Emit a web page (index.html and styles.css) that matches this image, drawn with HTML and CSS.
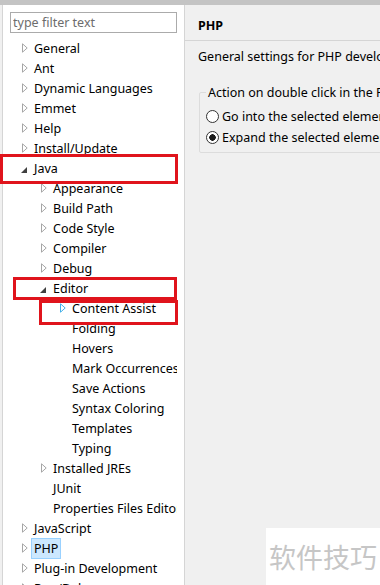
FILE: index.html
```html
<!DOCTYPE html>
<html lang="en">
<head>
    <meta charset="UTF-8">
    <title>Preferences</title>
    <link rel="stylesheet" href="styles.css">
</head>
<body>

    <div class="topbar"></div>

    <div class="frame">
        <!-- left: filter + tree -->
        <div class="side">
            <input class="filter" type="text" placeholder="type filter text">
            <div class="tree">
                <div class="row l0"><span class="tw"></span>General</div>
                <div class="row l0"><span class="tw"></span>Ant</div>
                <div class="row l0"><span class="tw"></span>Dynamic Languages</div>
                <div class="row l0"><span class="tw"></span>Emmet</div>
                <div class="row l0"><span class="tw"></span>Help</div>
                <div class="row l0"><span class="tw"></span>Install/Update</div>
                <div class="row l0"><span class="tw open"></span>Java</div>
                <div class="row l1"><span class="tw"></span>Appearance</div>
                <div class="row l1"><span class="tw"></span>Build Path</div>
                <div class="row l1"><span class="tw"></span>Code Style</div>
                <div class="row l1"><span class="tw"></span>Compiler</div>
                <div class="row l1"><span class="tw"></span>Debug</div>
                <div class="row l1"><span class="tw open"></span>Editor</div>
                <div class="row l2"><span class="tw hot"></span>Content Assist</div>
                <div class="row l2"><span class="tw none"></span>Folding</div>
                <div class="row l2"><span class="tw none"></span>Hovers</div>
                <div class="row l2"><span class="tw none"></span>Mark Occurrences</div>
                <div class="row l2"><span class="tw none"></span>Save Actions</div>
                <div class="row l2"><span class="tw none"></span>Syntax Coloring</div>
                <div class="row l2"><span class="tw none"></span>Templates</div>
                <div class="row l2"><span class="tw none"></span>Typing</div>
                <div class="row l1"><span class="tw"></span>Installed JREs</div>
                <div class="row l1"><span class="tw none"></span>JUnit</div>
                <div class="row l1"><span class="tw none"></span>Properties Files Editor</div>
                <div class="row l0"><span class="tw"></span>JavaScript</div>
                <div class="row l0"><span class="tw"></span><span class="sel">PHP</span></div>
                <div class="row l0"><span class="tw"></span>Plug-in Development</div>
                <div class="row l0"><span class="tw"></span>Run/Debug</div>
            </div>
        </div>

        <!-- right: PHP page -->
        <div class="page">
            <div class="page-title">PHP</div>
            <div class="page-body">
                <p class="desc">General settings for PHP development</p>
                <fieldset class="group">
                    <legend>Action on double click in the PHP Explorer view</legend>
                    <label class="radio"><span class="dot"></span>Go into the selected element</label>
                    <label class="radio"><span class="dot on"></span>Expand the selected element</label>
                </fieldset>
            </div>
        </div>

        <!-- annotation boxes drawn over the tree -->
        <div class="mark mark-java"></div>
        <div class="mark mark-editor"></div>
        <div class="mark mark-assist"></div>

        <div class="watermark">软件技巧</div>
    </div>

</body>
</html>
```

FILE: styles.css
```css
body {
    margin: 0;
    width: 380px;
    height: 585px;
    overflow: hidden;
    background: #f0f0f0;
    font-family: "Noto Sans", "Noto Sans CJK SC", sans-serif;
    font-size: 12px;
    color: #000;
}
.topbar {
    height: 5px;
    background: #c4c4c4;
}
.frame {
    position: relative;
    display: flex;
    height: 580px;
}

/* left side */
.side {
    width: 181px;
    margin-left: 2px;
    border-left: 1px solid #d5d5d5;
    border-right: 1px solid #d5d5d5;
    background: #fff;
    padding-top: 7px;
    overflow: hidden;
}
.filter {
    display: block;
    box-sizing: border-box;
    width: 167px;
    height: 21px;
    margin-left: 7px;
    padding: 0 2px;
    border: 1px solid #ababab;
    font-family: inherit;
    font-size: 12.5px;
    color: #6d6d6d;
    outline: none;
}
.filter::placeholder { color: #6d6d6d; }
.tree {
    width: 174px;
    margin-top: 5px;
    overflow: hidden;
}
.row {
    display: flex;
    align-items: center;
    height: 20px;
    white-space: nowrap;
    font-size: 12.5px;
}
.l0 { padding-left: 17px; }
.l1 { padding-left: 36px; }
.l2 { padding-left: 55px; }
.tw {
    flex: none;
    width: 14px;
    height: 20px;
    background: no-repeat 2px center;
    background-image: url("data:image/svg+xml,%3Csvg xmlns='http://www.w3.org/2000/svg' width='6' height='10'%3E%3Cpath d='M0.5 0.8 L5.2 5 L0.5 9.2 Z' fill='none' stroke='%23a6a6a6'/%3E%3C/svg%3E");
}
.tw.open {
    background-position: 1px 9px;
    background-image: url("data:image/svg+xml,%3Csvg xmlns='http://www.w3.org/2000/svg' width='7' height='7'%3E%3Cpath d='M6 0 L6 6 L0 6 Z' fill='%23404040'/%3E%3C/svg%3E");
}
.tw.hot {
    background-image: url("data:image/svg+xml,%3Csvg xmlns='http://www.w3.org/2000/svg' width='6' height='10'%3E%3Cpath d='M0.5 0.8 L5.2 5 L0.5 9.2 Z' fill='none' stroke='%2344b0e8'/%3E%3C/svg%3E");
}
.tw.none { background-image: none; }
.sel {
    margin-left: -3px;
    padding: 1px 2px;
    line-height: 17px;
    background: #cce8ff;
    border: 1px solid #99d1ff;
}

/* right side */
.page {
    flex: 1;
    overflow: hidden;
    white-space: nowrap;
}
.page-title {
    height: 28px;
    line-height: 28px;
    padding: 7px 0 0 13px;
    border-bottom: 1px solid #d5d5d5;
    font-weight: bold;
    font-size: 12.5px;
}
.page-body {
    padding-left: 13px;
    font-size: 12.5px;
}
.desc {
    margin: 7px 0 0;
    line-height: 17px;
}
.group {
    margin: 19px 0 0 1px;
    padding: 5px 0 4px 6px;
    border: 1px solid #dcdcdc;
    border-radius: 2px;
    width: 300px;
}
.group legend {
    padding: 0 2px;
    margin-left: 0;
    line-height: 17px;
}
.radio {
    display: flex;
    align-items: center;
    height: 21px;
}
.dot {
    box-sizing: border-box;
    width: 13px;
    height: 13px;
    margin-right: 3px;
    border: 1px solid #333;
    border-radius: 50%;
    background: #fff;
}
.dot.on {
    background: radial-gradient(circle, #1a1a1a 0 3px, #fff 3.5px);
}

/* red annotation boxes */
.mark {
    position: absolute;
    border: 3px solid #e0141c;
    box-sizing: border-box;
}
.mark-java { left: 0; top: 149px; width: 178px; height: 30px; }
.mark-editor { left: 13px; top: 272px; width: 164px; height: 23px; }
.mark-assist { left: 39px; top: 295px; width: 139px; height: 25px; }

.watermark {
    position: absolute;
    left: 266px;
    top: 523px;
    width: 114px;
    height: 57px;
    background: #fff;
    color: #c6c6c6;
    font-family: "Noto Sans CJK SC", sans-serif;
    font-size: 27px;
    line-height: 57px;
    padding-left: 3px;
    box-sizing: border-box;
}
```
